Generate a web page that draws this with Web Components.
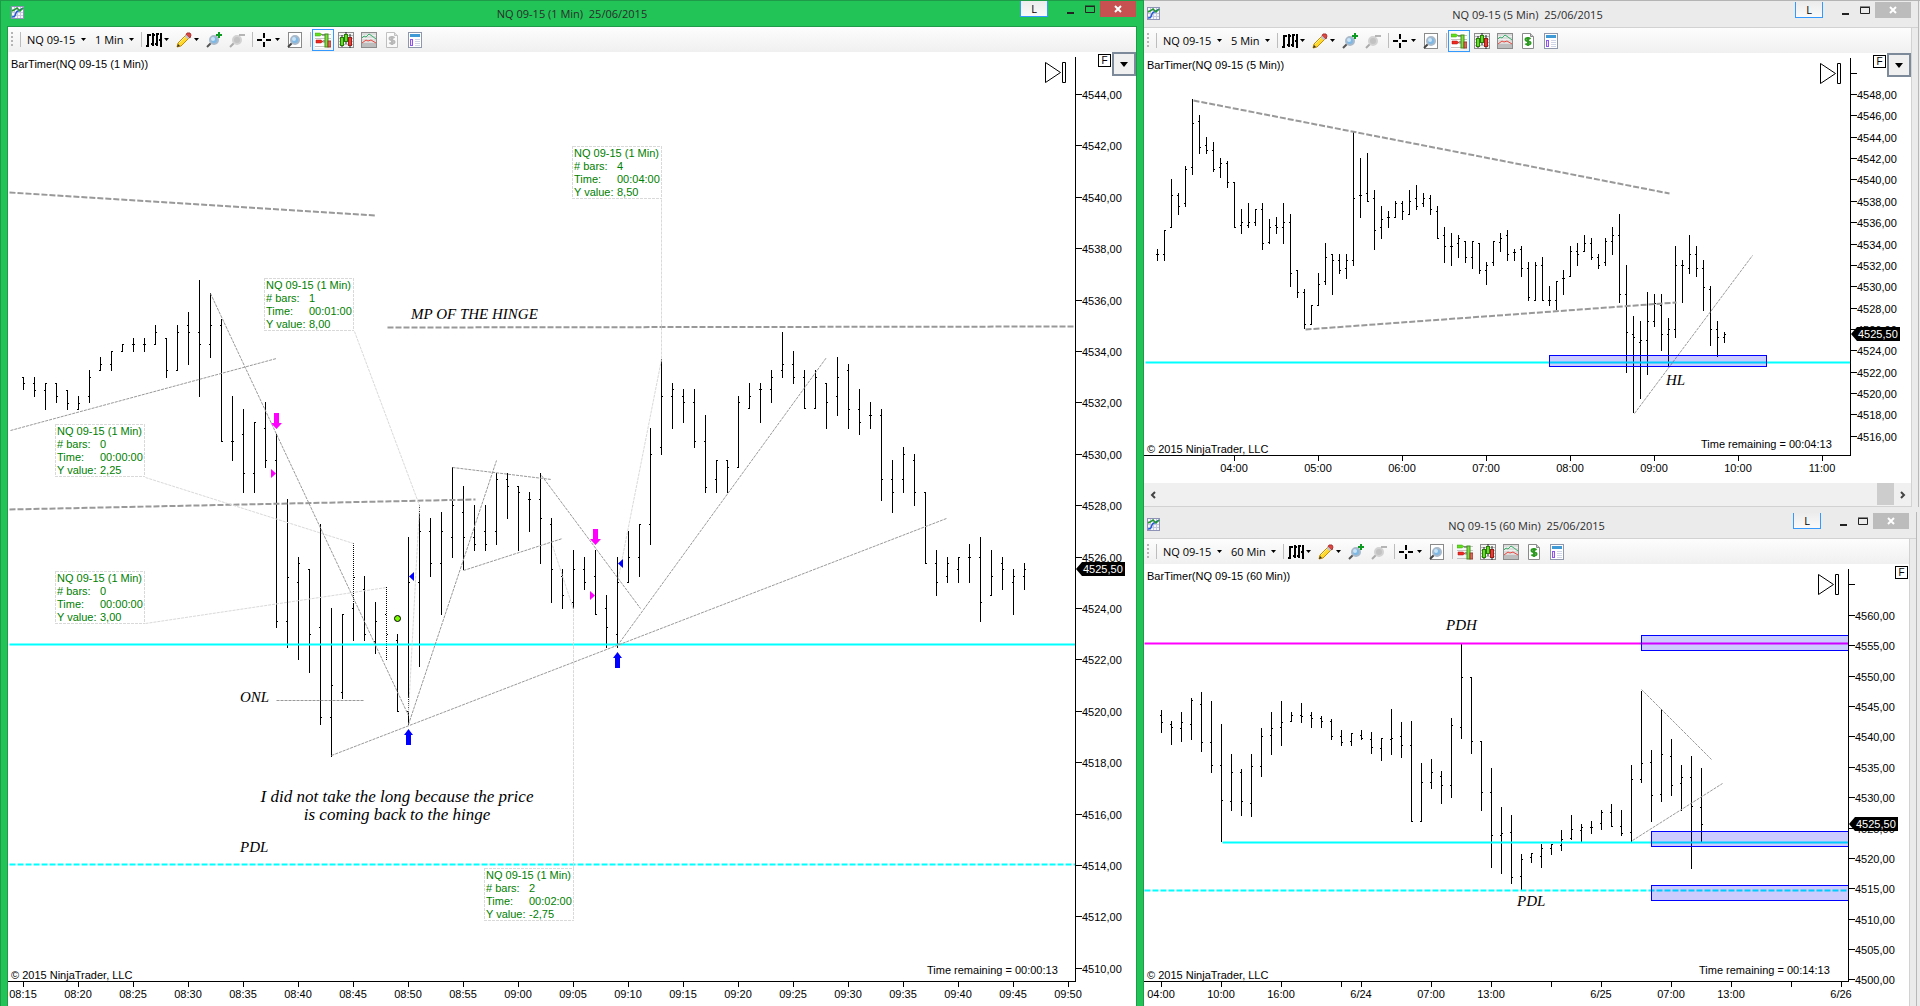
<!DOCTYPE html>
<html lang="en">
<head>
<meta charset="utf-8">
<title>NQ 09-15</title>
<style>
    body {
        margin: 0;
        background: #ebebeb;
        font-family: "Open Sans", "Noto Sans", sans-serif;
        font-size: 11px;
        color: #000;
    }
    .desktop {
        display: grid;
        grid-template-columns: 1144fr 776fr;
        align-items: start;
        overflow: hidden;
    }
    .side {
        border-top: 1px solid #b4b4b4;
    }
    #five {
        margin-right: 1px;
        margin-bottom: 5px;
    }
    #sixty {
        margin-right: 3px;
    }
</style>
</head>
<body>
<main class="desktop">
    <chart-window id="one" active caption="NQ 09-15 (1 Min)  25/06/2015">
        <chart-toolbar instrument="NQ 09-15" interval="1 Min" trader="on" account="off"></chart-toolbar>
        <price-chart source="m1" menu></price-chart>
    </chart-window>
    <div class="side">
        <chart-window id="five" caption="NQ 09-15 (5 Min)  25/06/2015">
            <chart-toolbar instrument="NQ 09-15" interval="5 Min" trader="on"></chart-toolbar>
            <price-chart source="m5" menu></price-chart>
            <time-scroll></time-scroll>
        </chart-window>
        <chart-window id="sixty" caption="NQ 09-15 (60 Min)  25/06/2015">
            <chart-toolbar instrument="NQ 09-15" interval="60 Min"></chart-toolbar>
            <price-chart source="m60"></price-chart>
        </chart-window>
    </div>
</main>

<script>
/**
 * Small 16x16 glyphs used in the tool bars and title bars
 */
const ICONS = {
    app: `
        <rect x="1.500" y="1.500" width="12" height="12" fill="#f4f6fb" stroke="#8f93b5"/>
        <path d="M4.500 2v11M7.500 2v11M10.500 2v11M2 4.500h11M2 7.500h11M2 10.500h11" stroke="#c3c8dc"/>
        <path d="M2 12c3 0 3-1 4-4s3-1 4-3l3-2" fill="none" stroke="#2458d8" stroke-width="1.500"/>
        <path d="M2 6l2-1 3-2 3 3 3-3" fill="none" stroke="#1f9a2a" stroke-width="1.500"/>`,
    bars: `
        <path d="M2 2v13M7 1v13M11 1v13M15 1v14" stroke="#000" stroke-width="2"/>
        <path d="M0 14h2M2 3h3M5 12h2M7 3h2M9 12h2M11 2h2M13 8h3" stroke="#000" stroke-width="2"/>`,
    pencil: `
        <path d="M1 15l1-4L11 2l3 3-9 9z" fill="#ffd92b" stroke="#c58a00"/>
        <path d="M3 11l8-8" stroke="#fff3a0"/>
        <path d="M10 3l1-2h3l1 2-1 3z" fill="#e0453f" stroke="#a33"/>
        <path d="M9.500 3.500l3 3" stroke="#bcc6d8" stroke-width="2"/>
        <path d="M1 15l1-3 2 2z" fill="#333"/>`,
    zoomIn: `
        <path d="M1 15l4-4" stroke="#555" stroke-width="2"/>
        <circle cx="8" cy="8" r="4" fill="#7db9e6" stroke="#a9b9c9" stroke-width="2"/>
        <circle cx="7" cy="7" r="2" fill="#c9e4f7"/>
        <path d="M13 0v6M10 3h6" stroke="#0c9a20" stroke-width="2"/>`,
    zoomOut: `
        <path d="M1 15l4-4" stroke="#aaa" stroke-width="2"/>
        <circle cx="8" cy="8" r="4" fill="#c2c2c2" stroke="#d2d2d2" stroke-width="2"/>
        <path d="M10 3h6" stroke="#b5b5b5" stroke-width="2"/>`,
    cross: `<path d="M7 1v5M7 10v5M0 8h5M9 8h5" stroke="#000" stroke-width="2"/>`,
    page: `
        <rect x="1.500" y=".5" width="13" height="15" fill="#fff" stroke="#8a8a8a"/>
        <path d="M1 15l4-4" stroke="#444" stroke-width="2"/>
        <circle cx="8" cy="8" r="4" fill="#7db9e6" stroke="#a9b9c9" stroke-width="2"/>
        <circle cx="7" cy="7" r="2" fill="#c9e4f7"/>`,
    trader: `
        <path d="M5 2.500h11M0 6.500h16M8 10.500h8M0 14.500h16" stroke="#c4c4c4"/>
        <path d="M0 1h5l2 1.500L5 4H0z" fill="#62e01c" stroke="#3a9a10" stroke-width=".5"/>
        <path d="M1 8h5l2 1.500L6 11H1z" fill="#f02a20" stroke="#a01010" stroke-width=".5"/>
        <path d="M7 3h4M8 9h2" stroke="#444"/>
        <rect x="10" y="2" width="3" height="13" fill="#7ce23c" stroke="#3f8f1a"/>
        <rect x="13" y="9" width="3" height="6" fill="#d86a5a" stroke="#973a30"/>`,
    candles: `
        <rect x=".5" y=".5" width="15" height="15" fill="#f3f3f3" stroke="#8c8c8c"/>
        <path d="M1 3.500h14M1 6.500h14M1 9.500h14M1 12.500h14" stroke="#b9b9b9"/>
        <path d="M4 3v12M8 0v12M12 2v14" stroke="#222"/>
        <rect x="2.500" y="5.500" width="3" height="8" fill="#63df25" stroke="#2b7a0b"/>
        <rect x="6.500" y="2.500" width="3" height="7" fill="#63df25" stroke="#2b7a0b"/>
        <rect x="10.500" y="5.500" width="3" height="8" fill="#ee3a30" stroke="#90211c"/>`,
    lines: `
        <rect x=".5" y=".5" width="15" height="15" fill="#dcdcdc" stroke="#8c8c8c"/>
        <rect x="1" y="11" width="14" height="4" fill="#bdbdbd"/>
        <path d="M1 3.500h14M1 6.500h14" stroke="#efefef"/>
        <path d="M1 6l2-2 2 1 3-3 3 2 4 3" fill="none" stroke="#38b06a"/>
        <path d="M1 11l4-3 2 1 3-1 5 3" fill="none" stroke="#e8483f"/>`,
    account: `
        <path d="M2.500.5h8l3 3v12h-11z" fill="#fff" stroke="#8a8a8a"/>
        <path d="M10.500.5v3h3" fill="#ccc" stroke="#8a8a8a"/>
        <path d="M10.500 6C9 4.500 5.500 4.500 5.500 6.500c0 2.500 5 1 5 3.500 0 2-4 2-5 .5M8 4v9" fill="none" stroke="#2f9a22" stroke-width="2"/>`,
    layout: `
        <rect x="1.500" y=".5" width="13" height="15" fill="#fff" stroke="#8f97ad"/>
        <rect x="3" y="2" width="10" height="3" fill="#3f9ad6"/>
        <rect x="3.500" y="7.500" width="2" height="6" fill="#ece2ff" stroke="#8d55e8"/>
        <path d="M8 7.500h5M8 9.500h5M8 11.500h5M8 13.500h5" stroke="#cfd4e6"/>`
};

const icon = name => `<svg width="16" height="16" viewBox="0 0 16 16" aria-hidden="true">${ICONS[name]}</svg>`;
const caret = `<svg width="5" height="3" viewBox="0 0 5 3" aria-hidden="true"><path d="M0 0h5L2.500 3z"/></svg>`;

/**
 * Framed window with a title bar and its content in the default slot
 */
class ChartWindow extends HTMLElement {
    constructor() {
        super();
        this.attachShadow({ mode: 'open' });
    }

    connectedCallback() {
        this.shadowRoot.innerHTML = `
            <style>
                :host {
                    display: block;
                    box-sizing: border-box;
                    background: #ebebeb;
                    border-right: 1px solid #b8b8b8;
                    --line: #d2d2d2;
                    --close: #bcbcbc;
                }
                :host([active]) {
                    background: #23c457;
                    border-right: 0;
                    box-shadow: inset 1px 1px #1e9a48, inset -1px 0 #1e9a48;
                    --line: #1e9a48;
                    --close: #c75050;
                }
                header {
                    display: grid;
                    grid-template-columns: 1fr auto 1fr;
                    height: 26px;
                    padding-right: 7px;
                    border-bottom: 1px solid var(--line);
                    color: #2b2b2b;
                }
                :host([active]) header {
                    margin: 0 7px;
                    padding: 0 1px;
                }
                .app {
                    padding: 5px 2px;
                }
                h1 {
                    margin: 0;
                    font-size: 11px;
                    font-weight: 400;
                    line-height: 28px;
                    white-space: pre;
                }
                .controls {
                    display: flex;
                    justify-content: flex-end;
                    padding-top: 1px;
                }
                button {
                    box-sizing: border-box;
                    width: 20px;
                    height: 16px;
                    padding: 0;
                    border: 0;
                    background: none;
                    font: inherit;
                    color: inherit;
                }
                .link {
                    width: 28px;
                    margin-right: 12px;
                    border: 1px solid #3399ff;
                    border-top: 0;
                    background: linear-gradient(#ececec, #fafafa);
                    color: #000;
                }
                .close {
                    width: 36px;
                    background: var(--close);
                }
                .controls svg {
                    display: block;
                    margin: auto;
                }
                .body {
                    border-right: 1px solid var(--line);
                    border-bottom: 1px solid var(--line);
                    margin-right: 6px;
                    background: #fff;
                }
                :host([active]) .body {
                    margin: 0 7px;
                    border: 0 solid var(--line);
                    border-width: 0 1px;
                }
                :host(#sixty) .body {
                    border-bottom: 0;
                }
            </style>
            <header>
                <div class="app">${icon('app')}</div>
                <h1>${this.getAttribute('caption')}</h1>
                <div class="controls">
                    <button class="link" aria-label="Link">L</button>
                    <button aria-label="Minimize"><svg width="9" height="9"><path d="M1 7h7v2H1z" fill="#222"/></svg></button>
                    <button aria-label="Maximize"><svg width="10" height="9"><path d="M.5 1.500h9v6h-9zM0 1h10" fill="none" stroke="#222"/></svg></button>
                    <button class="close" aria-label="Close"><svg width="8" height="8"><path d="M1 1l6 6M7 1l-6 6" stroke="#fff" stroke-width="2"/></svg></button>
                </div>
            </header>
            <div class="body"><slot></slot></div>
        `;
    }
}
customElements.define('chart-window', ChartWindow);

/**
 * Tool bar with the instrument and interval pickers
 */
class ChartToolbar extends HTMLElement {
    constructor() {
        super();
        this.attachShadow({ mode: 'open' });
    }

    connectedCallback() {
        const trader = this.getAttribute('trader') === 'on' ? 'on' : '';
        const account = this.getAttribute('account') === 'off' ? 'disabled' : '';
        this.shadowRoot.innerHTML = `
            <style>
                :host {
                    display: flex;
                    align-items: center;
                    gap: 7px;
                    height: 25px;
                    padding-left: 3px;
                    background: linear-gradient(#fdfdfd, #f0f0f0);
                }
                .grip {
                    width: 2px;
                    height: 15px;
                    background: repeating-linear-gradient(#b5b5b5 0 2px, transparent 2px 4px);
                }
                .sep {
                    width: 1px;
                    height: 15px;
                    margin-right: -3px;
                    background: #bdbdbd;
                }
                label {
                    display: flex;
                    align-items: center;
                    gap: 5px;
                    margin-left: 2px;
                }
                select {
                    appearance: none;
                    padding: 0;
                    border: 0;
                    background: none;
                    font: inherit;
                    color: #000;
                }
                button {
                    display: flex;
                    align-items: center;
                    gap: 2px;
                    padding: 0;
                    border: 0;
                    background: none;
                }
                button:disabled {
                    filter: grayscale(1);
                    opacity: .5;
                }
                .on {
                    outline: 1px solid #3399ff;
                    outline-offset: 2px;
                    background: #fff;
                }
            </style>
            <span class="grip"></span>
            <span class="sep"></span>
            <label><select aria-label="Instrument"><option>${this.getAttribute('instrument')}</option></select>${caret}</label>
            <label><select aria-label="Interval"><option>${this.getAttribute('interval')}</option></select>${caret}</label>
            <span class="sep"></span>
            <button aria-label="Chart style">${icon('bars')}${caret}</button>
            <button aria-label="Drawing tools">${icon('pencil')}${caret}</button>
            <button aria-label="Zoom in">${icon('zoomIn')}</button>
            <button aria-label="Zoom out">${icon('zoomOut')}</button>
            <span class="sep"></span>
            <button aria-label="Cursor">${icon('cross')}${caret}</button>
            <button aria-label="Data box">${icon('page')}</button>
            <span class="sep"></span>
            <button class="${trader}" aria-label="Chart trader">${icon('trader')}</button>
            <button aria-label="Data series">${icon('candles')}</button>
            <button aria-label="Indicators">${icon('lines')}</button>
            <button aria-label="Strategies" ${account}>${icon('account')}</button>
            <button aria-label="Properties">${icon('layout')}</button>
        `;
    }
}
customElements.define('chart-toolbar', ChartToolbar);

/**
 * Horizontal scroll strip below a chart
 */
class TimeScroll extends HTMLElement {
    constructor() {
        super();
        this.attachShadow({ mode: 'open' });
        this.shadowRoot.innerHTML = `
            <style>
                :host {
                    display: flex;
                    height: 23px;
                    background: #f0f0f0;
                }
                button {
                    width: 17px;
                    padding: 0;
                    border: 0;
                    background: none;
                }
                .track {
                    flex: 1;
                    display: flex;
                    justify-content: flex-end;
                }
                .thumb {
                    width: 17px;
                    height: 22px;
                    background: #cdcdcd;
                }
            </style>
            <button aria-label="Scroll left"><svg width="6" height="8"><path d="M5 1L2 4l3 3" fill="none" stroke="#444" stroke-width="2"/></svg></button>
            <div class="track"><div class="thumb"></div></div>
            <button aria-label="Scroll right"><svg width="6" height="8"><path d="M1 1l3 3-3 3" fill="none" stroke="#444" stroke-width="2"/></svg></button>
        `;
    }
}
customElements.define('time-scroll', TimeScroll);

/**
 * Chart data. Bars are "open high low close" as heights on the chart surface,
 * one bar every `step` from `first`. Lines are [style, x1, y1, x2, y2, ...].
 */
const CHARTS = {
    m1: {
        view: [8, 52, 1128, 954],
        title: 'BarTimer(NQ 09-15 (1 Min))',
        axisX: 1075, axisY: 981, top: 57,
        price: { from: 4544, to: 4510, by: 2, y: 95, step: 51.4 },
        tag: 569,
        times: [...Array(20).keys()].map(i => {
            const m = 15 + i * 5;
            return [23 + i * 55, `0${8 + Math.floor(m / 60)}:${String(m % 60).padStart(2, '0')}`];
        }),
        remaining: ['Time remaining = 00:00:13', 927],
        first: 23, step: 11,
        bars: `377 377 390 383|383 377 397 390|390 383 410 383|383 383 403 396|390 390 410 403|409 396 410 403|396 370 403 377|370 357 371 364|364 351 371 351|351 344 352 344|344 338 352 344|344 338 352 344|344 325 345 332|338 338 378 370|370 325 371 332|325 312 365 332|332 280 397 344|344 293 358 325|325 319 442 441|441 396 461 441|434 409 493 473|473 422 493 422|428 402 468 460|460 434 628 621|621 499 648 577|582 557 660 563|569 569 673 634|627 524 725 717|717 608 757 685|692 614 699 614|608 543 641 577|589 576 641 634|641 602 654 621|614 587 660 634|640 634 712 711|711 537 725 582|582 505 667 531|531 518 577 563|563 512 615 531|537 467 558 505|512 486 570 537|537 505 551 544|531 505 551 544|531 473 545 479|479 473 519 486|486 486 551 492|499 492 532 499|499 473 564 518|524 518 603 569|576 569 609 595|602 550 609 569|569 557 590 582|576 550 615 614|608 595 648 627|634 557 648 582|582 531 583 557|557 524 577 524|524 428 545 454|447 359 455 396|396 383 429 389|396 389 423 402|402 389 448 441|441 415 493 487|479 460 493 460|460 460 493 467|467 396 468 402|408 383 409 396|389 383 423 389|389 370 403 377|370 332 378 364|364 351 384 377|377 370 409 408|408 370 409 377|383 383 429 402|396 357 416 377|370 364 429 409|409 389 435 422|415 402 429 415|415 409 501 479|479 460 513 492|479 447 493 454|460 454 506 492|492 492 564 563|563 550 596 582|576 557 583 563|569 557 583 557|557 544 583 557|557 537 622 602|595 550 596 576|563 557 590 569|582 569 615 576|576 563 590 569`,
        lines: [
            ['gap', 353, 543, 353, 603],
            ['gap', 386, 587, 386, 660],
            ['gap', 408, 697, 408, 710],
            ['gap', 419, 505, 419, 513],
            ['level', 9, 644, 1075, 644],
            ['level dash', 9, 864, 1075, 864],
            ['thick', 9, 192, 376, 215],
            ['thick', 9, 509, 475, 499],
            ['thick', 387, 327, 1075, 326],
            ['thin', 10, 430, 276, 358],
            ['thin', 210, 293, 408, 715],
            ['thin', 331, 755, 946, 518],
            ['thin', 408, 724, 496, 460],
            ['thin', 452, 467, 551, 479],
            ['thin', 463, 570, 562, 538],
            ['thin', 541, 475, 640, 608],
            ['thin', 617, 645, 826, 357],
            ['thin', 276, 700, 364, 700],
            ['lead', 145, 477, 353, 543],
            ['lead', 145, 623, 386, 587],
            ['lead', 354, 331, 419, 505, 408, 712],
            ['lead', 661, 199, 661, 359, 618, 577],
            ['lead', 552, 545, 573, 609, 573, 868]
        ],
        notes: [
            ['MP OF THE HINGE', 411, 319],
            ['ONL', 240, 702],
            ['PDL', 240, 852],
            ['I did not take the long because the price', 397, 802, 'long'],
            ['is coming back to the hinge', 397, 820, 'long']
        ],
        rulers: [
            [572, 146, '4', '00:04:00', '8,50'],
            [264, 278, '1', '00:01:00', '8,00'],
            [55, 424, '0', '00:00:00', '2,25'],
            [55, 571, '0', '00:00:00', '3,00'],
            [484, 868, '2', '00:02:00', '-2,75']
        ],
        marks: `
            <path id="down" d="M274 413h5v10h3l-5.500 6-5.500-6h3z" fill="#f0f"/>
            <use href="#down" x="319" y="116"/>
            <path id="sell" d="M271 469l5 4.500-5 4.500z" fill="#f0f"/>
            <use href="#sell" x="319" y="122"/>
            <path id="up" d="M406 745h5v-10h2l-4.500-6-4.500 6h2z" fill="#00f"/>
            <use href="#up" x="209" y="-77"/>
            <path id="buy" d="M414 572l-5 4.500 5 4.500z" fill="#00f"/>
            <use href="#buy" x="209" y="-13"/>
            <circle cx="397.500" cy="618.500" r="3" fill="#7cfc00" stroke="#000"/>`
    },
    m5: {
        view: [1144, 53, 767, 430],
        title: 'BarTimer(NQ 09-15 (5 Min))',
        axisX: 1850, axisY: 455, top: 58,
        price: { from: 4548, to: 4516, by: 2, y: 95, step: 21.36, extra: 73 },
        tag: 334,
        times: ['04:00', '05:00', '06:00', '07:00', '08:00', '09:00', '10:00', '11:00'].map((t, i) => [1234 + i * 84, t]),
        remaining: ['Time remaining = 00:04:13', 1701],
        first: 1157, step: 7,
        bars: `254 249 261 254|254 230 261 230|227 179 228 195|195 193 215 206|203 166 207 169|167 99 175 123|121 115 154 147|145 137 154 150|150 142 172 169|167 158 178 163|163 161 188 182|182 182 228 227|225 209 234 222|225 203 228 222|222 209 226 209|209 203 250 243|242 219 244 227|225 217 234 227|227 203 244 222|222 214 287 273|270 270 298 292|292 289 329 324|324 305 325 305|305 273 306 284|281 243 285 257|254 254 295 260|260 254 274 270|268 254 279 260|260 131 266 198|195 158 218 195|193 153 202 201|198 190 250 230|227 206 239 219|217 211 228 217|217 201 218 203|203 201 220 211|214 190 215 201|198 185 210 206|203 193 207 198|198 195 215 209|211 206 239 238|235 227 263 246|246 233 266 246|243 235 258 238|241 241 263 257|257 241 269 241|243 243 274 270|270 262 285 265|262 241 266 241|242 233 252 238|235 230 261 254|252 249 261 252|249 246 277 268|268 262 301 297|300 262 301 265|265 257 301 300|300 286 306 300|300 281 310 281|278 270 295 278|276 246 277 251|251 243 266 254|251 235 252 243|243 238 260 257|257 254 269 265|262 238 266 241|241 227 255 235|235 214 303 294|294 265 373 332|334 316 413 337|342 321 399 340|340 292 375 321|321 294 327 303|305 294 351 334|334 318 366 329|329 246 338 265|265 260 303 265|268 235 274 254|254 246 277 268|268 260 311 287|289 286 346 329|329 321 357 337|337 332 343 334`,
        lines: [
            ['level', 1145, 362, 1850, 362],
            ['thick', 1193, 100, 1669, 193],
            ['thick', 1305, 329, 1676, 302],
            ['thin', 1634, 413, 1752, 255]
        ],
        zones: [[1549, 355, 217, 11]],
        notes: [['HL', 1666, 385]]
    },
    m60: {
        view: [1144, 564, 765, 442],
        title: 'BarTimer(NQ 09-15 (60 Min))',
        axisX: 1848, axisY: 981, top: 569,
        price: { from: 4560, to: 4500, by: 5, y: 616, step: 30.36, extra: 584 },
        tag: 824,
        times: [[1161, '04:00'], [1221, '10:00'], [1281, '16:00'], [1341, ''], [1361, '6/24'], [1431, '07:00'], [1491, '13:00'],
            [1551, ''], [1601, '6/25'], [1671, '07:00'], [1731, '13:00'], [1791, ''], [1841, '6/26']],
        remaining: ['Time remaining = 00:14:13', 1699],
        first: 1161, step: 10,
        bars: `715 710 733 722|724 721 745 727|728 712 742 722|724 698 740 700|704 692 752 742|742 701 773 765|765 724 842 800|801 754 811 772|772 769 816 801|803 754 817 766|766 728 777 736|735 712 755 728|727 701 746 722|721 712 722 715|715 703 723 716|715 712 728 718|718 716 728 721|721 719 740 736|736 730 746 742|741 733 746 733|735 730 740 738|739 732 754 747|748 738 761 738|739 709 755 738|736 722 758 745|745 721 822 821|821 763 822 782|782 759 789 772|776 771 804 785|785 718 798 725|727 644 739 677|677 677 754 741|741 741 811 792|792 768 868 835|835 807 874 833|832 815 884 877|876 854 891 859|857 853 863 853|856 844 868 848|848 844 855 844|845 830 851 839|838 815 840 829|830 824 842 827|827 821 834 827|823 810 830 812|812 804 827 826|826 810 836 833|832 765 842 779|779 691 783 763|762 750 822 795|794 709 802 754|756 739 796 785|783 765 811 777|777 756 869 806|807 768 842 824`,
        lines: [
            ['level high', 1144, 643, 1848, 643],
            ['level', 1222, 842, 1848, 842],
            ['level dash', 1144, 890, 1848, 890],
            ['thin', 1641, 689, 1711, 759],
            ['thin', 1632, 840, 1722, 783]
        ],
        zones: [[1641, 635, 230, 15], [1651, 831, 230, 15], [1651, 885, 230, 15]],
        notes: [['PDH', 1446, 630], ['PDL', 1517, 906]]
    }
};

/**
 * Price chart drawn from one entry of CHARTS
 */
class PriceChart extends HTMLElement {
    constructor() {
        super();
        this.attachShadow({ mode: 'open' });
    }

    connectedCallback() {
        const data = CHARTS[this.getAttribute('source')];
        const [x, y, w, h] = data.view;
        const menu = this.hasAttribute('menu') ? `<button class="menu" aria-label="Panel menu"><svg width="8" height="5"><path d="M0 0h8L4 5z"/></svg></button>` : '';
        this.shadowRoot.innerHTML = `
            <style>
                :host {
                    display: block;
                    position: relative;
                    background: #fff;
                }
                .plot {
                    display: block;
                    width: 100%;
                    height: auto;
                    font-family: "Liberation Sans", Arial, sans-serif;
                    font-size: 11px;
                }
                .axis, .play { fill: none; stroke: #000; }
                .axis, .bars, .zone, .frame { shape-rendering: crispEdges; }
                .line { fill: none; stroke: #999; stroke-width: 1; stroke-dasharray: 3 1; }
                .line.thick { stroke-width: 2; stroke-dasharray: 6 2; }
                .line.lead { stroke: #d9d9d9; }
                .line.gap { stroke: #fff; stroke-dasharray: 1 1; shape-rendering: crispEdges; }
                .line.level { stroke: #0ff; stroke-width: 2; stroke-dasharray: none; }
                .line.dash { stroke-dasharray: 6 2; }
                .line.high { stroke: #f0f; }
                .zone { fill: #00f; fill-opacity: .2; stroke: #00f; }
                .frame { fill: none; stroke: #d9d9d9; stroke-dasharray: 3 1; }
                .note { font-family: "Liberation Serif", Cambria, serif; font-size: 15px; font-style: italic; }
                .long { font-size: 17px; text-anchor: middle; }
                .ruler { fill: #008000; }
                .time { text-anchor: middle; }
                .last { fill: #fff; }
                .tools {
                    position: absolute;
                    top: 0;
                    right: 0;
                    display: flex;
                    align-items: flex-start;
                    gap: 1px;
                }
                button {
                    box-sizing: border-box;
                    padding: 0;
                    font-size: 10px;
                    line-height: 10px;
                    font-family: "Liberation Sans", Arial, sans-serif;
                }
                .fixed {
                    width: 13px;
                    height: 13px;
                    margin-top: 2px;
                    border: 1px solid #000;
                    background: #fff;
                    color: #000;
                }
                .fixed:last-child {
                    margin-right: 1px;
                }
                .menu {
                    width: 24px;
                    height: 24px;
                    border: 2px solid #7d8a9a;
                    background: #f0f0f0;
                }
                .menu svg {
                    display: block;
                    margin: auto;
                }
            </style>
            <svg class="plot" viewBox="${x} ${y} ${w} ${h}">
                <clipPath id="area"><rect x="${x}" y="${y}" width="${data.axisX - x}" height="${data.axisY - y}"/></clipPath>
                <g clip-path="url(#area)">
                    <path class="bars" d="${this.bars(data)}"/>
                    ${data.lines.map(l => this.line(l)).join('')}
                    ${(data.zones || []).map(z => `<rect class="zone" x="${z[0] + .5}" y="${z[1] + .5}" width="${z[2]}" height="${z[3]}"/>`).join('')}
                    ${data.marks || ''}
                </g>
                ${(data.rulers || []).map(r => this.ruler(r)).join('')}
                ${data.notes.map(n => `<text class="note ${n[3] || ''}" x="${n[1]}" y="${n[2]}">${n[0]}</text>`).join('')}
                <text x="${x + 3}" y="${y + 16}">${data.title}</text>
                <text x="${x + 3}" y="${data.axisY - 2}">© 2015 NinjaTrader, LLC</text>
                <text x="${data.remaining[1]}" y="${data.axisY - 7}">${data.remaining[0]}</text>
                <path class="play" d="M${data.axisX - 29.5} ${y + 10.5}v20l15-10zM${data.axisX - 12.5} ${y + 10.5}h3v20h-3z"/>
                ${this.axes(data)}
            </svg>
            <div class="tools"><button class="fixed" aria-label="Fixed scale">F</button>${menu}</div>
        `;
    }

    bars({ bars, first, step }) {
        return bars.split('|').map((bar, i) => {
            const [o, h, l, c] = bar.split(' ');
            const x = first + i * step;
            return `M${x} ${h}h1V${l}h-1zM${x - 1} ${o}h1v1h-1zM${x + 1} ${c}h1v1h-1z`;
        }).join('');
    }

    line([style, ...points]) {
        return `<polyline class="line ${style}" points="${points.map(p => p + .5).join(' ')}"/>`;
    }

    ruler([x, y, bars, time, value]) {
        const rows = [['# bars:', bars], ['Time:', time], ['Y value:', value]];
        return `
            <rect class="frame" x="${x + .5}" y="${y + .5}" width="89" height="52"/>
            <g class="ruler">
                <text x="${x + 2}" y="${y + 11}">NQ 09-15 (1 Min)</text>
                ${rows.map(([k, v], i) => `<text x="${x + 2}" y="${y + 24 + i * 13}">${k}</text><text x="${x + 45}" y="${y + 24 + i * 13}">${v}</text>`).join('')}
            </g>`;
    }

    axes({ view, axisX, axisY, top, price, tag, times }) {
        let path = `M${axisX + .5} ${top}V${axisY + .5}H${view[0]}`;
        let labels = '';
        if (price.extra) {
            path += `M${axisX} ${price.extra + .5}h7`;
        }
        for (let p = price.from, i = 0; p >= price.to; p -= price.by, i++) {
            const y = Math.round(price.y + i * price.step) - 1;
            path += `M${axisX} ${y + .5}h7`;
            labels += `<text x="${axisX + 7}" y="${y + 5}">${p},00</text>`;
        }
        times.forEach(([x, text]) => {
            path += `M${x + .5} ${axisY}v6`;
            labels += `<text class="time" x="${x}" y="${axisY + 17}">${text}</text>`;
        });
        return `
            <path class="axis" d="${path}"/>
            ${labels}
            <path d="M${axisX + 1} ${tag}l6-7h43v14h-43z"/>
            <text class="last" x="${axisX + 8}" y="${tag + 4}">4525,50</text>`;
    }
}
customElements.define('price-chart', PriceChart);
</script>
</body>
</html>
